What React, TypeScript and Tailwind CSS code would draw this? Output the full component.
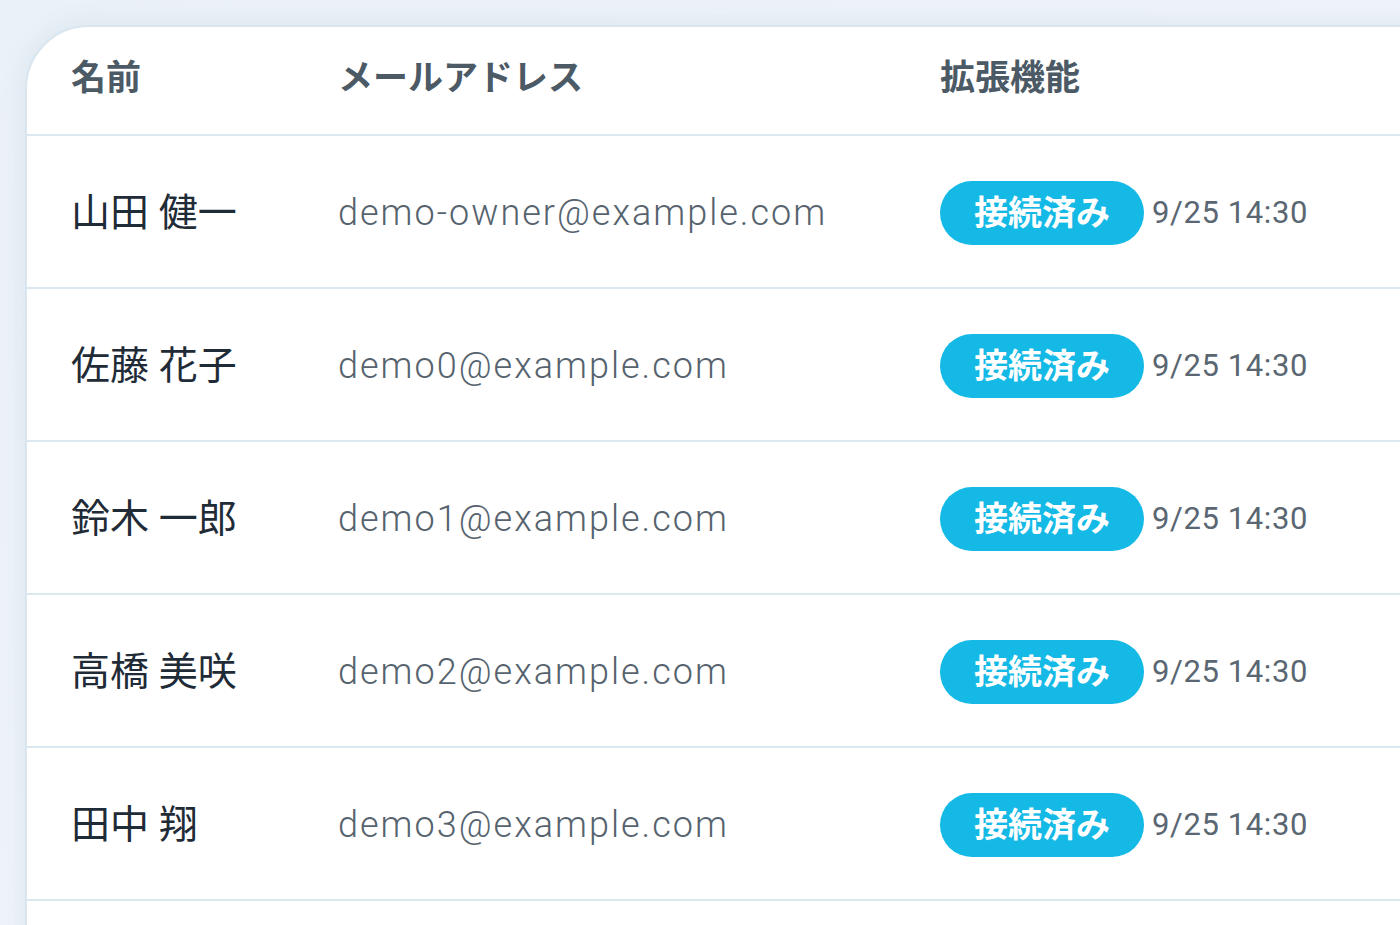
const rows = [
  { name: "山田 健一", email: "demo-owner@example.com" },
  { name: "佐藤 花子", email: "demo0@example.com" },
  { name: "鈴木 一郎", email: "demo1@example.com" },
  { name: "高橋 美咲", email: "demo2@example.com" },
  { name: "田中 翔", email: "demo3@example.com" },
];

const font = { fontFamily: 'Roboto, "Noto Sans CJK JP", sans-serif' };

export default function App() {
  return (
    <div
      className="w-[1400px] h-[925px] overflow-hidden bg-gradient-to-br from-[#eaf1f7] to-[#f1f6fa] pt-[25px] pl-[25px]"
      style={font}
    >
      <div className="w-[1420px] h-[1000px] bg-white border-2 border-[#d9e6ef] rounded-tl-[64px] shadow-[0_0_24px_rgba(120,160,190,0.15)] overflow-hidden">
        {/* Header */}
        <div className="grid grid-cols-[267px_602px_1fr] items-center h-[109px] pl-[44px] pb-[2px] border-b-2 border-[#dce8f0]">
          <div className="text-[35px] font-bold text-[#4c5a66]">名前</div>
          <div className="text-[35px] font-bold text-[#4c5a66]">メールアドレス</div>
          <div className="text-[35px] font-bold text-[#4c5a66]">拡張機能</div>
        </div>

        {/* Rows */}
        {rows.map((r) => (
          <div
            key={r.email}
            className="grid grid-cols-[267px_602px_1fr] items-center h-[153px] pl-[44px] pt-[3px] border-b-2 border-[#dce8f0]"
          >
            <div className="text-[39px] text-[#1f2b36]">{r.name}</div>
            <div className="text-[36px] font-light text-[#56636e] tracking-[2px]">{r.email}</div>
            <div className="flex items-center gap-2">
              <span className="inline-flex items-center justify-center h-[64px] w-[204px] rounded-full bg-[#14b9e6] text-white text-[34px] font-bold">
                接続済み
              </span>
              <span className="text-[31px] text-[#5a6772] tracking-[0.6px]">9/25 14:30</span>
            </div>
          </div>
        ))}
        <div className="h-[153px]" />
      </div>
    </div>
  );
}
